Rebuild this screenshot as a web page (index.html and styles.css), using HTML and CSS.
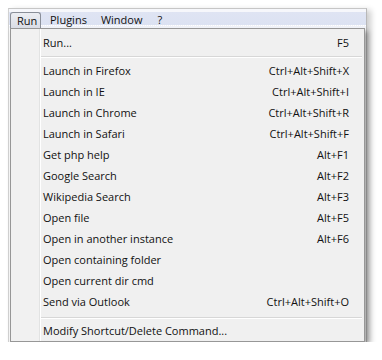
FILE: index.html
```html
<!DOCTYPE html>
<html>
<head>
<meta charset="utf-8">
<link rel="stylesheet" href="styles.css">
</head>
<body>
<div class="app">
  <div class="menubar">
    <span class="mb-item active">Run</span>
    <span class="mb-item">Plugins</span>
    <span class="mb-item">Window</span>
    <span class="mb-item">?</span>
  </div>
  <div class="menu">
    <div class="row"><span>Run...</span><span>F5</span></div>
    <div class="sep"></div>
    <div class="row"><span>Launch in Firefox</span><span>Ctrl+Alt+Shift+X</span></div>
    <div class="row"><span>Launch in IE</span><span>Ctrl+Alt+Shift+I</span></div>
    <div class="row"><span>Launch in Chrome</span><span>Ctrl+Alt+Shift+R</span></div>
    <div class="row"><span>Launch in Safari</span><span>Ctrl+Alt+Shift+F</span></div>
    <div class="row"><span>Get php help</span><span>Alt+F1</span></div>
    <div class="row"><span>Google Search</span><span>Alt+F2</span></div>
    <div class="row"><span>Wikipedia Search</span><span>Alt+F3</span></div>
    <div class="row"><span>Open file</span><span>Alt+F5</span></div>
    <div class="row"><span>Open in another instance</span><span>Alt+F6</span></div>
    <div class="row"><span>Open containing folder</span><span></span></div>
    <div class="row"><span>Open current dir cmd</span><span></span></div>
    <div class="row"><span>Send via Outlook</span><span>Ctrl+Alt+Shift+O</span></div>
    <div class="sep sep2"></div>
    <div class="row"><span>Modify Shortcut/Delete Command...</span><span></span></div>
  </div>
</div>
</body>
</html>
```
FILE: styles.css
```css
html, body {
  margin: 0;
  padding: 0;
  background: #ffffff;
}
body {
  font-family: "Open Sans", "Noto Sans", sans-serif;
  font-size: 11px;
  color: #111;
}
.app {
  margin: 8px 0 0 8px;
  width: 357px;
  border-top: 1px solid #c6c6c6;
  border-left: 1px solid #d2d2d2;
  border-right: 1px solid #b8b8b8;
  background: #fbfbfb;
  box-shadow: 4px 2px 6px rgba(0,0,0,0.2);
}
.menubar {
  height: 19px;
  display: flex;
  align-items: flex-end;
  background: linear-gradient(#f6f7fb 0, #f6f7fb 3px, #dfe4f3 3px, #dce2f2 16px, #f0f2f8 16px);
  position: relative;
}
.menubar::after {
  content: "";
  position: absolute;
  left: 0;
  right: 0;
  top: 16px;
  border-top: 1px dotted #ffffff;
}
.mb-item {
  height: 16px;
  line-height: 15px;
  padding: 0 7px 0 6px;
  box-sizing: border-box;
  position: relative;
  z-index: 1;
}
.mb-item:nth-child(2) { padding-left: 9px; padding-right: 7px; }
.mb-item:nth-child(3) { padding-left: 7px; padding-right: 7px; }
.mb-item:nth-child(4) { padding-left: 8px; }
.mb-item.active {
  margin-left: 1px;
  width: 31px;
  padding: 0 0 0 6px;
  border: 1px solid #8a8f99;
  border-bottom: none;
  border-radius: 3px 3px 0 0;
  background: linear-gradient(#eceef3, #dadde5);
}
.menu {
  margin-left: 1px;
  width: 355px;
  height: 314px;
  box-sizing: border-box;
  border: 1px solid #979797;
  background: linear-gradient(to right, #f1f1f1 0, #f1f1f1 28px, #e2e3e3 28px, #e2e3e3 29px, #ffffff 29px, #ffffff 30px, #f0f0f0 30px);
  padding-top: 3px;
  box-shadow: 3px 3px 5px rgba(0,0,0,0.35);
}
.row {
  height: 21px;
  display: flex;
  justify-content: space-between;
  align-items: center;
  padding: 0 15px 0 32px;
}
.sep {
  height: 7px;
  margin-left: 30px;
  margin-right: 2px;
  position: relative;
}
.sep::before {
  content: "";
  position: absolute;
  left: 0;
  right: 0;
  top: 3px;
  border-top: 1px solid #d7d7d7;
  border-bottom: 1px solid #ffffff;
}
.sep2 {
  height: 8px;
}
.sep2::before {
  top: 5px;
}
```
